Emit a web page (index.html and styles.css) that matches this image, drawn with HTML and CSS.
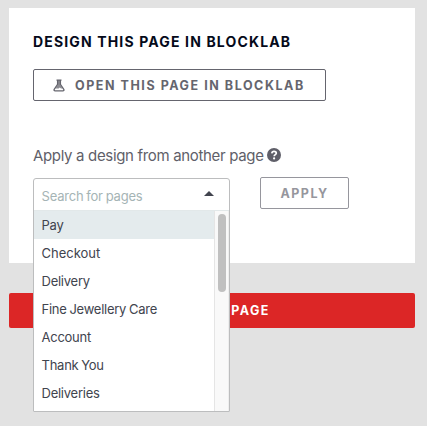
FILE: index.html
```html
<!DOCTYPE html>
<html lang="en">
<head>
<meta charset="utf-8">
<title>Page design</title>
<link rel="stylesheet" href="styles.css">
</head>
<body>
<main class="card">
  <h1 class="title">DESIGN THIS PAGE IN BLOCKLAB</h1>
  <button class="btn btn-open">
    <svg class="flask" viewBox="0 0 12 13"><path d="M3.500 1.200h5M4.600 1.200v4.200L1.200 10.300c-.5.9 0 1.600.9 1.600h7.800c.9 0 1.400-.7.9-1.600L7.400 5.400V1.200" fill="none" stroke="#65656e" stroke-width="1.300"/><path d="M4.600 1h2.800v5l2 3.500H8l-1.200-1-1.200 1H2.600l2-3.500z" fill="#65656e" opacity=".75"/></svg>
    <span>OPEN THIS PAGE IN BLOCKLAB</span>
  </button>
  <div class="label"><span>Apply a design from another page</span>
    <svg class="help" viewBox="0 0 14 14"><circle cx="7" cy="7" r="7" fill="#5f5f69"/><path d="M4.800 5.300C5 3.900 5.800 3.300 7 3.300c1.400 0 2.300.8 2.300 1.900C9.300 6.600 7.200 6.600 7.200 8.200" fill="none" stroke="#fff" stroke-width="1.700"/><circle cx="7.100" cy="10.400" r="1.100" fill="#fff"/></svg>
  </div>
  <div class="row">
    <div class="select">
      <div class="control"><span>Search for pages</span><i class="caret"></i></div>
      <div class="menu">
        <ul class="options">
          <li class="active">Pay</li>
          <li class="wide">Checkout</li>
          <li>Delivery</li>
          <li>Fine Jewellery Care</li>
          <li>Account</li>
          <li>Thank You</li>
          <li>Deliveries</li>
        </ul>
        <div class="track"><div class="thumb"></div></div>
      </div>
    </div>
    <button class="btn btn-apply">APPLY</button>
  </div>
</main>
<button class="delete">DELETE PAGE</button>
</body>
</html>
```
FILE: styles.css
```css
* { box-sizing: border-box; }
body {
  margin: 0;
  padding: 8px 12px 0 9px;
  height: 426px;
  overflow: hidden;
  background: #e2e2e2;
  font-family: Inter, "Liberation Sans", sans-serif;
  color: #41444e;
}
button { font-family: inherit; }
.card {
  height: 255px;
  padding: 24px 24px 0;
  background: #fff;
}
.title {
  margin: 0;
  height: 20px;
  line-height: 20px;
  font-size: 14px;
  font-weight: 700;
  letter-spacing: 1.150px;
  white-space: nowrap;
  color: #050a1a;
}
.btn {
  display: flex;
  align-items: center;
  height: 32px;
  padding: 0;
  border: 1px solid #65656e;
  border-radius: 2px;
  background: #fff;
  color: #65656e;
  font-size: 12.5px;
  font-weight: 700;
  white-space: nowrap;
}
.btn-open {
  width: 293px;
  margin-top: 17px;
  padding-left: 19px;
  gap: 10px;
  letter-spacing: 1.55px;
}
.flask { width: 12px; height: 13px; flex: none; }
.label {
  display: flex;
  align-items: center;
  gap: 3px;
  height: 24px;
  margin-top: 42px;
  font-size: 15px;
  letter-spacing: -.33px;
  white-space: nowrap;
  color: #5f5f69;
}
.help { width: 14px; height: 14px; flex: none; }
.row {
  display: flex;
  align-items: flex-start;
  gap: 30px;
  margin-top: 10px;
}
.select {
  position: relative;
  z-index: 1;
  width: 197px;
  height: 234px;
  margin-top: 1px;
  border: 1px solid #bcbdbe;
  border-radius: 3px 3px 1px 1px;
  background: #fff;
  font-size: 13px;
  letter-spacing: -.25px;
  word-spacing: -.6px;
}
.control {
  display: flex;
  align-items: center;
  justify-content: space-between;
  height: 31px;
  padding: 3px 15px 0 7.5px;
  color: #a5b4b5;
}
.control span { letter-spacing: -.2px; }
.caret {
  margin-top: -5px;
  border: 5px solid transparent;
  border-top: 0;
  border-bottom-color: #41444e;
}
.menu { display: flex; height: 201px; border-top: 1px solid #e2e8e9; }
.options { flex: 1; margin: 0; padding: 0; list-style: none; }
.options li { height: 28px; padding-left: 7.5px; line-height: 29px; }
.options .active { background: #e4ebed; }
.options .wide { letter-spacing: 0; }
.track {
  width: 15px;
  padding: 3px 3px 0;
  border-left: 1px solid #e5e5e5;
  border-right: 1px solid #eee;
  background: #f9f9f9;
}
.thumb { width: 8px; height: 78px; border-radius: 4px; background: #c0c0c0; }
.btn-apply {
  width: 89px;
  justify-content: center;
  border-color: #96969d;
  color: #96969d;
  letter-spacing: 1.5px;
}
.delete {
  display: block;
  width: 406px;
  height: 35px;
  margin-top: 30px;
  padding: 0 0 0 17px;
  border: 0;
  border-radius: 2px;
  background: #dc2626;
  color: #fff;
  font-size: 12.5px;
  font-weight: 700;
  letter-spacing: 1.4px;
}
```
